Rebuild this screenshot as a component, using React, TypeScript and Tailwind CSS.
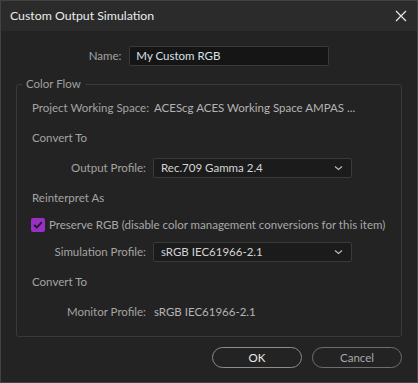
import React from "react";

const font = { fontFamily: 'Lato, "Noto Sans", sans-serif' };

function Chevron() {
  return (
    <svg width="9" height="6" viewBox="0 0 9 6" className="text-[#b8b8b8]">
      <path d="M1 1.5 L4.5 4.5 L8 1.5" fill="none" stroke="currentColor" strokeWidth="1.2" />
    </svg>
  );
}

function Select({ value }: { value: string }) {
  return (
    <div className="w-[199px] h-[20px] bg-[#1b1b1b] border border-[#3a3a3a] rounded-[2px] flex items-center pl-[7px] pr-[8px] text-[#d4d4d4]">
      <span className="flex-1">{value}</span>
      <Chevron />
    </div>
  );
}

function LabelRow({ label, children, h = "h-[30px]" }: { label: string; children: React.ReactNode; h?: string }) {
  return (
    <div className={`flex items-center ${h}`}>
      <div className="w-[114px] text-right text-[#a3a3a3] whitespace-nowrap">{label}</div>
      <div className="ml-[7px]">{children}</div>
    </div>
  );
}

export default function App() {
  return (
    <div
      className="w-[418px] h-[383px] bg-[#232323] border border-[#424242] flex flex-col text-[11.5px] leading-none select-none"
      style={font}
    >
      <div className="h-[30px] bg-[#2b2b2b] flex items-center pl-[9px] pr-[10px] shrink-0">
        <span className="flex-1 text-[12.3px] text-[#ececec]">Custom Output Simulation</span>
        <svg width="12" height="12" viewBox="0 0 12 12" className="text-[#e4e4e4]">
          <path d="M1 1 L11 11 M11 1 L1 11" stroke="currentColor" strokeWidth="1.3" />
        </svg>
      </div>
      <div className="flex-1 px-[15px] pt-[15px] flex flex-col">
        <div className="flex justify-center items-center gap-[8px]">
          <span className="text-[#a3a3a3]">Name:</span>
          <div className="w-[200px] h-[20px] bg-[#151515] border border-[#3a3a3a] rounded-[2px] flex items-center pl-[6px] text-[#d8e0e8]">
            My Custom RGB
          </div>
        </div>
        <div className="relative mt-[18px] border border-[#3a3a3a] rounded-[3px] pt-[8px] pb-[8px] px-[15px] h-[253px]">
          <span className="absolute -top-[7px] left-[5px] px-[4px] bg-[#232323] text-[#a0a0a0]">Color Flow</span>
          <div className="flex items-center h-[30px]">
            <span className="text-[#a3a3a3] w-[114px] text-right whitespace-nowrap">Project Working Space:</span>
            <span className="ml-[8px] text-[#b4b4b4] whitespace-nowrap">ACEScg ACES Working Space AMPAS ...</span>
          </div>
          <div className="flex items-center h-[30px] text-[#a3a3a3]">Convert To</div>
          <LabelRow label="Output Profile:">
            <Select value="Rec.709 Gamma 2.4" />
          </LabelRow>
          <div className="flex items-center h-[30px] text-[#a3a3a3]">Reinterpret As</div>
          <div className="flex items-center h-[24px]">
            <div className="w-[14px] h-[14px] -ml-[1px] rounded-[2px] bg-[#9a2fc7] flex items-center justify-center">
              <svg width="10" height="8" viewBox="0 0 10 8">
                <path d="M1.2 4 L3.8 6.5 L8.8 1.2" fill="none" stroke="#1c1c1c" strokeWidth="1.8" />
              </svg>
            </div>
            <span className="ml-[4px] text-[#a8a8a8] whitespace-nowrap">Preserve RGB (disable color management conversions for this item)</span>
          </div>
          <LabelRow label="Simulation Profile:">
            <Select value="sRGB IEC61966-2.1" />
          </LabelRow>
          <div className="flex items-center h-[30px] text-[#a3a3a3]">Convert To</div>
          <div className="flex items-center h-[30px]">
            <span className="text-[#a3a3a3] w-[114px] text-right whitespace-nowrap">Monitor Profile:</span>
            <span className="ml-[8px] text-[#b4b4b4]">sRGB IEC61966-2.1</span>
          </div>
        </div>
        <div className="flex justify-end gap-[10px] mt-[10px]">
          <button className="w-[90px] h-[21px] rounded-full border border-[#8c8c8c] text-[#ececec] flex items-center justify-center">OK</button>
          <button className="w-[90px] h-[21px] rounded-full border border-[#6e6e6e] text-[#a8a8a8] flex items-center justify-center">Cancel</button>
        </div>
      </div>
    </div>
  );
}
